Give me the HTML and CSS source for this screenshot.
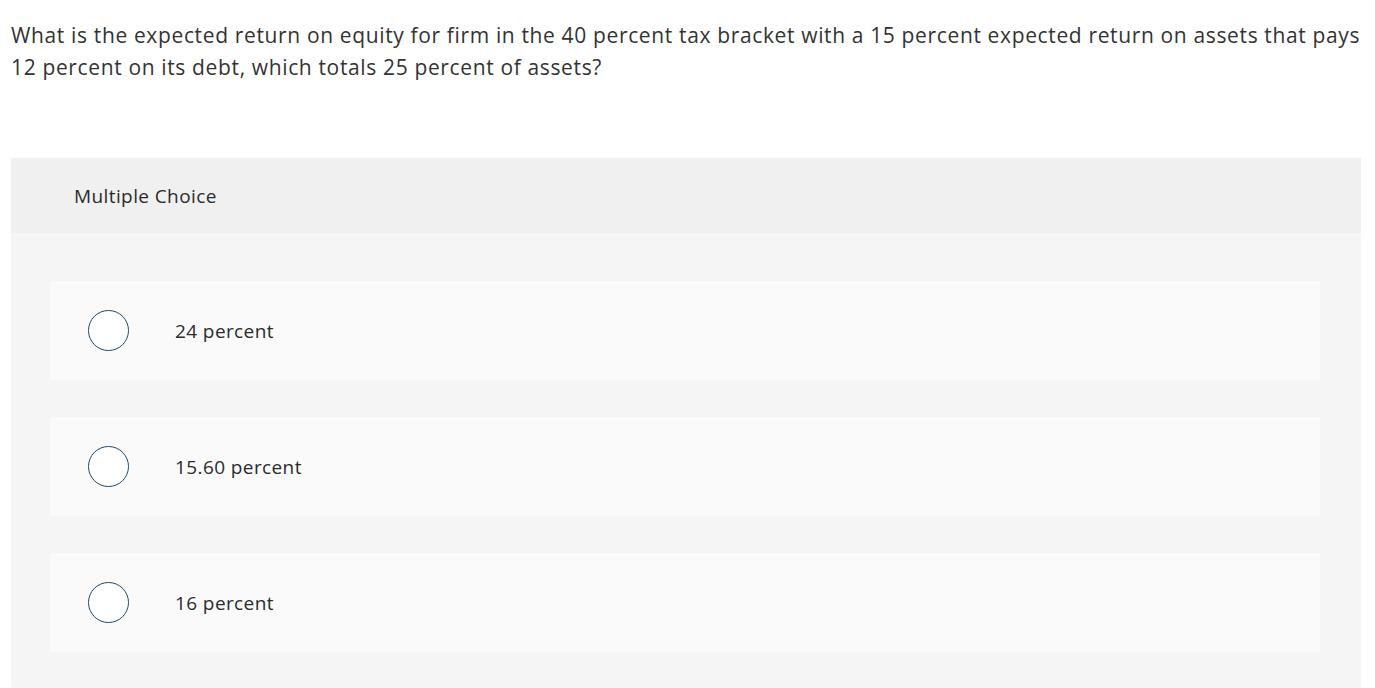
FILE: index.html
```html
<!DOCTYPE html>
<html>
<head>
<meta charset="utf-8">
<link rel="stylesheet" href="styles.css">
</head>
<body>
<div class="page">
  <p class="question">What is the expected return on equity for firm in the 40 percent tax bracket with a 15 percent expected return on assets that pays 12 percent on its debt, which totals 25 percent of assets?</p>
  <section class="panel">
    <header class="panel-head">Multiple Choice</header>
    <div class="panel-body">
      <div class="option"><span class="radio"></span><span class="label">24 percent</span></div>
      <div class="option"><span class="radio"></span><span class="label">15.60 percent</span></div>
      <div class="option"><span class="radio"></span><span class="label">16 percent</span></div>
    </div>
  </section>
</div>
</body>
</html>
```

FILE: styles.css
```css
html, body {
  margin: 0;
  padding: 0;
  background: #ffffff;
}
body {
  font-family: "Open Sans", Lato, sans-serif;
  color: #2b2b2b;
}
.page {
  padding: 0 14px 0 11px;
}
.question {
  margin: 0;
  padding-top: 19px;
  font-size: 21px;
  line-height: 32px;
  letter-spacing: 0.64px;
  color: #333;
}
.panel {
  margin-top: 75px;
  background: #f5f5f5;
  border-radius: 2px;
}
.panel-head {
  height: 75px;
  background: #f0f0f0;
  display: flex;
  align-items: center;
  padding-left: 63px;
  font-size: 19px;
  letter-spacing: 0.4px;
  color: #2b2b2b;
}
.panel-body {
  padding: 48px 41px 36px 39px;
  display: flex;
  flex-direction: column;
  gap: 37px;
}
.option {
  height: 99px;
  background: #fafafa;
  display: flex;
  align-items: center;
  padding-left: 38px;
}
.radio {
  width: 39px;
  height: 39px;
  border: 1px solid #1d4a6e;
  border-radius: 50%;
  background: #fff;
  flex: none;
}
.label {
  margin-left: 46px;
  font-size: 19px;
  letter-spacing: 0.4px;
  color: #2b2b2b;
}
```
